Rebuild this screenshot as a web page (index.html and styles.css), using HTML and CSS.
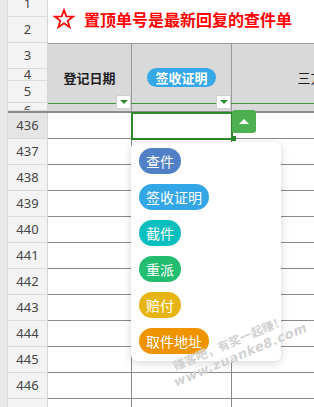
FILE: index.html
```html
<!DOCTYPE html>
<html lang="zh-CN">
<head>
  <meta charset="UTF-8">
  <title>查件单</title>
  <link rel="stylesheet" href="styles.css">
</head>
<body>
  <div class="sheet">
    <div class="strip"></div>

    <!-- en-tête figé -->
    <div class="rh r1"><span>1</span></div>
    <div class="rh r2"><span>2</span></div>
    <div class="rh r3"><span>3</span></div>
    <div class="rh r4"><span>4</span></div>
    <div class="rh r5"><span>5</span></div>
    <div class="rh r6"><span>6</span></div>

    <div class="title">
      <svg class="star" width="22" height="21" viewBox="-1 -1 22 21">
        <polygon points="10,0.9 12.29,7.34 19.13,7.53 13.71,11.71 15.64,18.27 10,14.4 4.36,18.27 6.29,11.71 0.87,7.53 7.71,7.34" fill="none" stroke="#ff0000" stroke-width="1.7" stroke-linejoin="miter"/>
      </svg>
      <span>置顶单号是最新回复的查件单</span>
    </div>

    <div class="hd col-a">登记日期<span class="filter"></span></div>
    <div class="hd col-b"><span class="tag">签收证明</span><span class="filter"></span></div>
    <div class="hd col-c">三方单号</div>

    <div class="freeze"></div>

    <!-- lignes -->
    <div class="rh cur">436</div>
    <div class="cell col-a"></div>
    <div class="cell col-b sel">
      <span class="handle"></span>
      <span class="dd-btn"></span>
      <div class="menu">
        <span class="pill p-blue">查件</span>
        <span class="pill p-sky">签收证明</span>
        <span class="pill p-teal">截件</span>
        <span class="pill p-green">重派</span>
        <span class="pill p-yellow">赔付</span>
        <span class="pill p-orange">取件地址</span>
      </div>
    </div>
    <div class="cell col-c"></div>

    <div class="rh">437</div><div class="cell col-a"></div><div class="cell col-b"></div><div class="cell col-c"></div>
    <div class="rh">438</div><div class="cell col-a"></div><div class="cell col-b"></div><div class="cell col-c"></div>
    <div class="rh">439</div><div class="cell col-a"></div><div class="cell col-b"></div><div class="cell col-c"></div>
    <div class="rh">440</div><div class="cell col-a"></div><div class="cell col-b"></div><div class="cell col-c"></div>
    <div class="rh">441</div><div class="cell col-a"></div><div class="cell col-b"></div><div class="cell col-c"></div>
    <div class="rh">442</div><div class="cell col-a"></div><div class="cell col-b"></div><div class="cell col-c"></div>
    <div class="rh">443</div><div class="cell col-a"></div><div class="cell col-b"></div><div class="cell col-c"></div>
    <div class="rh">444</div><div class="cell col-a"></div><div class="cell col-b"></div><div class="cell col-c"></div>
    <div class="rh">445</div><div class="cell col-a"></div><div class="cell col-b"></div><div class="cell col-c"></div>
    <div class="rh">446</div><div class="cell col-a"></div><div class="cell col-b"></div><div class="cell col-c"></div>
    <div class="rh">447</div><div class="cell col-a"></div><div class="cell col-b"></div><div class="cell col-c"></div>
  </div>

  <div class="watermark">
    <div>赚客吧，有奖一起赚！</div>
    <div class="wm-url">www.zuanke8.com</div>
  </div>
</body>
</html>
```

FILE: styles.css
```css
body {
  margin: 0;
  width: 314px;
  height: 407px;
  overflow: hidden;
  position: relative;
  background-color: #ffffff;
  font-family: "Noto Sans", "Noto Sans CJK SC", sans-serif;
}

.sheet {
  display: grid;
  grid-template-columns: 8px 40px 84px 100px 184px;
  grid-template-rows: 17px 26px 26px 12px 22px 8px 2px repeat(12, 26px);
}

.strip {
  grid-column: 1;
  grid-row: 1 / -1;
  background-color: #e9e9e9;
  border-right: 1px solid #dcdcdc;
}

/* numéros de ligne */
.rh {
  grid-column: 2;
  box-sizing: border-box;
  background-color: #f3f3f3;
  border-right: 1px solid #d6d6d6;
  border-bottom: 1px solid #dadada;
  display: flex;
  align-items: center;
  justify-content: center;
  overflow: hidden;
  font-size: 13px;
  line-height: 13px;
  color: #454545;
}

.rh.cur {
  background-color: #e5e5e5;
}

.r1 { grid-row: 1; align-items: flex-end; padding-bottom: 6px; }
.r2 { grid-row: 2; }
.r3 { grid-row: 3; }
.r4 { grid-row: 4; }
.r5 { grid-row: 5; }
.r6 { grid-row: 6; align-items: flex-start; padding-top: 1px; }

.title {
  grid-column: 3 / 6;
  grid-row: 1 / 3;
  display: flex;
  align-items: center;
  gap: 9px;
  padding: 0 0 6px 5px;
  color: #ff0000;
  font-family: "Noto Sans CJK SC", sans-serif;
  font-size: 16px;
  font-weight: bold;
}

.col-a { grid-column: 3; }
.col-b { grid-column: 4; }
.col-c { grid-column: 5; }

.hd {
  grid-row: 3 / 7;
  position: relative;
  box-sizing: border-box;
  background-color: #d9d9d9;
  border-top: 1px solid #9a9a9a;
  border-right: 1px solid #9a9a9a;
  display: flex;
  align-items: center;
  justify-content: center;
  font-family: "Noto Sans CJK SC", sans-serif;
  font-size: 13px;
  font-weight: bold;
  color: #1e1e1e;
}

.hd.col-c {
  font-weight: normal;
}

/* ligne verte du filtre */
.hd::after {
  content: "";
  position: absolute;
  left: 0;
  right: -1px;
  bottom: 7px;
  height: 1px;
  background-color: #3a9a3a;
}

.filter {
  position: absolute;
  right: 0;
  bottom: 2px;
  width: 15px;
  height: 14px;
  box-sizing: border-box;
  background-color: #ffffff;
  border: 1px solid #cfcfcf;
  display: flex;
  align-items: center;
  justify-content: center;
  z-index: 1;
}

.filter::before {
  content: "";
  border-left: 4px solid transparent;
  border-right: 4px solid transparent;
  border-top: 4px solid #2f8f2f;
}

.tag {
  display: inline-block;
  height: 19px;
  line-height: 19px;
  padding: 0 8px;
  border-radius: 10px;
  background-color: #36a8e8;
  color: #ffffff;
}

.freeze {
  grid-column: 2 / 6;
  grid-row: 7;
  background-color: #8c8c8c;
}

.cell {
  box-sizing: border-box;
  background-color: #ffffff;
  border-right: 1px solid #8a8a8a;
  border-bottom: 1px solid #8a8a8a;
}

.cell.sel {
  position: relative;
  outline: 2px solid #2b8a2b;
  outline-offset: -1px;
  z-index: 2;
}

.handle {
  position: absolute;
  right: -5px;
  bottom: -3px;
  width: 5px;
  height: 5px;
  background-color: #2b8a2b;
  z-index: 3;
}

.dd-btn {
  position: absolute;
  left: 100px;
  top: -3px;
  width: 24px;
  height: 23px;
  border-radius: 3px;
  background-color: #4caf50;
  display: flex;
  align-items: center;
  justify-content: center;
  z-index: 3;
}

.dd-btn::before {
  content: "";
  border-left: 5.5px solid transparent;
  border-right: 5.5px solid transparent;
  border-bottom: 5.5px solid #ffffff;
  margin-top: -1px;
}

.menu {
  position: absolute;
  left: -1px;
  top: 29px;
  width: 150px;
  box-sizing: border-box;
  padding: 6px 8px 7px;
  background-color: #ffffff;
  border-radius: 6px;
  box-shadow: 0 2px 10px rgba(0, 0, 0, 0.16);
  display: flex;
  flex-direction: column;
  align-items: flex-start;
  gap: 10px;
  z-index: 4;
}

.pill {
  height: 26px;
  line-height: 26px;
  padding: 0 7px;
  border-radius: 13px;
  color: #ffffff;
  font-family: "Noto Sans CJK SC", sans-serif;
  font-size: 14px;
}

.p-blue { background-color: #5080c6; }
.p-sky { background-color: #33a6e8; }
.p-teal { background-color: #08bebe; }
.p-green { background-color: #22bd6e; }
.p-yellow { background-color: #e6b512; }
.p-orange { background-color: #f09300; }

.watermark {
  position: absolute;
  left: 166px;
  top: 334px;
  width: 132px;
  transform: rotate(-23deg);
  text-align: center;
  font-family: "Noto Sans CJK SC", sans-serif;
  font-size: 12px;
  font-weight: bold;
  line-height: 16px;
  color: rgba(150, 150, 150, 0.45);
  text-shadow: 0 0 1px #ffffff;
  z-index: 10;
}

.wm-url {
  font-family: "DejaVu Sans", sans-serif;
  font-style: italic;
  font-size: 13px;
  letter-spacing: 0.5px;
}
```
